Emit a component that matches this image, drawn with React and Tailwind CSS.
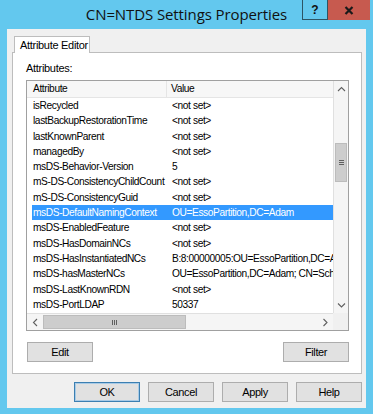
import React from 'react'

const rows = [
  ['isRecycled', '<not set>'],
  ['lastBackupRestorationTime', '<not set>'],
  ['lastKnownParent', '<not set>'],
  ['managedBy', '<not set>'],
  ['msDS-Behavior-Version', '5'],
  ['mS-DS-ConsistencyChildCount', '<not set>'],
  ['mS-DS-ConsistencyGuid', '<not set>'],
  ['msDS-DefaultNamingContext', 'OU=EssoPartition,DC=Adam'],
  ['msDS-EnabledFeature', '<not set>'],
  ['msDS-HasDomainNCs', '<not set>'],
  ['msDS-HasInstantiatedNCs', 'B:8:00000005:OU=EssoPartition,DC=Adam'],
  ['msDS-hasMasterNCs', 'OU=EssoPartition,DC=Adam; CN=Schema,CN=Configuration'],
  ['msDS-LastKnownRDN', '<not set>'],
  ['msDS-PortLDAP', '50337'],
  ['msDS-ReplAttributeMetaData', '<not set>'],
]

const SELECTED = 7

function Chevron({ dir }) {
  // petite flèche des barres de défilement
  const paths = {
    up: 'M1 5 L4.5 1.5 L8 5',
    down: 'M1 1.5 L4.5 5 L8 1.5',
    left: 'M5 1 L1.5 4.5 L5 8',
    right: 'M1.5 1 L5 4.5 L1.5 8',
  }
  const vertical = dir === 'up' || dir === 'down'
  return (
    <svg width={vertical ? 9 : 7} height={vertical ? 7 : 9} viewBox={vertical ? '0 0 9 7' : '0 0 7 9'}>
      <path d={paths[dir]} fill="none" stroke="#606060" strokeWidth="1.1" />
    </svg>
  )
}

function WinButton({ label, isDefault }) {
  return (
    <button
      className={
        'w-[66px] h-[20px] flex items-center justify-center bg-[#e1e1e1] text-[11px] text-black border ' +
        (isDefault ? 'border-[#3c7fb1] shadow-[inset_0_0_0_1px_#a9cbe6]' : 'border-[#adadad]')
      }
    >
      {label}
    </button>
  )
}

export default function App() {
  return (
    <div
      className="w-[373px] h-[414px] bg-[#63c8ee] flex flex-col relative overflow-hidden"
      style={{ fontFamily: '"Liberation Sans", Arial, sans-serif' }}
    >
      {/* barre de titre */}
      <div className="h-[29px] flex items-center justify-center shrink-0">
        <span className="text-[15px] text-[#111] tracking-[-0.1px] pb-[1px]" style={{ fontFamily: '"Open Sans", "Liberation Sans", sans-serif' }}>
          CN=NTDS Settings Properties
        </span>
      </div>
      <div className="absolute top-0 left-[302px] flex">
        <div className="w-[26px] h-[20px] border border-t-0 border-[#2d5565] flex items-center justify-center text-[12px] font-bold text-[#111] leading-none">
          ?
        </div>
        <div className="w-[42px] h-[20px] bg-[#c75a4f] flex items-center justify-center">
          <svg width="10" height="9" viewBox="0 0 10 9">
            <path d="M1.5 1 L8.5 8 M8.5 1 L1.5 8" stroke="#1a1a1a" strokeWidth="2.2" />
          </svg>
        </div>
      </div>

      {/* zone client */}
      <div className="ml-[7px] w-[359px] h-[379px] bg-[#f0f0f0] flex flex-col text-[10.2px] text-black tracking-[-0.4px]">
        {/* onglet */}
        <div className="h-[23px] pl-[7px] flex items-end shrink-0">
          <div className="h-[17px] w-[76px] bg-white border border-b-0 border-[#bdbdbd] flex items-center pl-[5px] relative top-[1px] z-10 text-[11px] tracking-[-0.3px]">
            Attribute Editor
          </div>
        </div>

        {/* panneau */}
        <div className="ml-[5px] w-[350px] h-[322px] bg-white border border-[#bdbdbd] flex flex-col pl-[13px] pr-[12px]">
          <div className="h-[27px] flex items-end pb-[4px] text-[11px] tracking-[-0.3px]">Attributes:</div>

          {/* liste */}
          <div className="w-[323px] h-[251px] border border-[#a0a0a0] flex flex-col">
            <div className="flex h-[232px]">
              <div className="w-[306px] flex flex-col overflow-hidden">
                <div className="h-[17px] shrink-0 flex bg-[#f7f7f7] border-b border-[#e5e5e5]">
                  <div className="w-[140px] shrink-0 border-r border-[#e5e5e5] pl-[6px] flex items-center">Attribute</div>
                  <div className="pl-[4px] flex items-center">Value</div>
                </div>
                {rows.map(([attr, val], i) => (
                  <div key={attr} className="h-[15.3px] shrink-0 flex pl-[5px] whitespace-nowrap">
                    <div className={'flex w-full items-center ' + (i === SELECTED ? 'bg-[#3399ff] text-white' : '')}>
                      <div className="w-[135px] shrink-0 pl-[1px] overflow-hidden">{attr}</div>
                      <div className="pl-[5px]">{val}</div>
                    </div>
                  </div>
                ))}
              </div>
              {/* barre verticale */}
              <div className="w-[15px] bg-[#f5f5f5] border-l border-[#e0e0e0] flex flex-col">
                <div className="h-[16px] flex items-center justify-center shrink-0"><Chevron dir="up" /></div>
                <div className="flex-1 flex flex-col pt-[46px]">
                  <div className="h-[39px] mx-[1px] bg-[#cdcdcd] border border-[#bcbcbc] flex flex-col items-center justify-center gap-[1px]">
                    <div className="w-[5px] h-[1px] bg-[#606060]" />
                    <div className="w-[5px] h-[1px] bg-[#606060]" />
                    <div className="w-[5px] h-[1px] bg-[#606060]" />
                  </div>
                </div>
                <div className="h-[16px] flex items-center justify-center shrink-0"><Chevron dir="down" /></div>
              </div>
            </div>
            {/* barre horizontale */}
            <div className="flex h-[17px]">
              <div className="w-[306px] bg-[#f5f5f5] border-t border-[#e0e0e0] flex">
                <div className="w-[16px] flex items-center justify-center shrink-0"><Chevron dir="left" /></div>
                <div className="w-[143px] my-[1px] bg-[#cdcdcd] border border-[#bcbcbc] flex items-center justify-center gap-[1px]">
                  <div className="w-[1px] h-[5px] bg-[#606060]" />
                  <div className="w-[1px] h-[5px] bg-[#606060]" />
                  <div className="w-[1px] h-[5px] bg-[#606060]" />
                </div>
                <div className="flex-1" />
                <div className="w-[16px] flex items-center justify-center shrink-0"><Chevron dir="right" /></div>
              </div>
              <div className="flex-1 bg-[#f0f0f0]" />
            </div>
          </div>

          <div className="mt-[11px] flex justify-between pl-[1px]">
            <WinButton label="Edit" />
            <WinButton label="Filter" />
          </div>
        </div>

        {/* boutons du bas */}
        <div className="mt-[8px] flex justify-end gap-[8px] pr-[4px]">
          <WinButton label="OK" isDefault />
          <WinButton label="Cancel" />
          <WinButton label="Apply" />
          <WinButton label="Help" />
        </div>
      </div>
    </div>
  )
}
